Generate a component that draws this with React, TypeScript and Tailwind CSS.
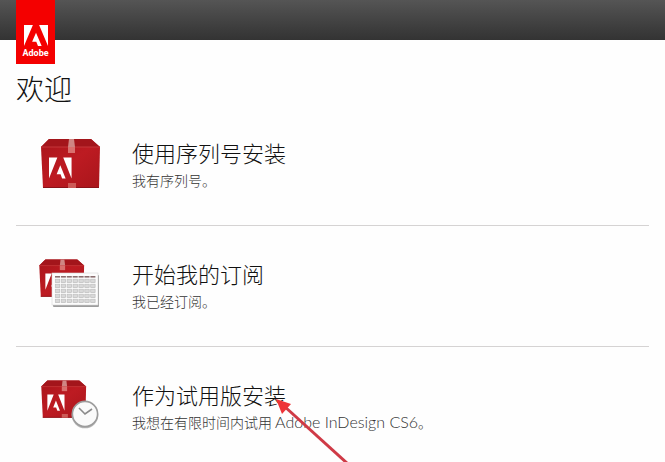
import type { ReactNode } from 'react'

type Option = {
  title: string
  detail: ReactNode
  icon: ReactNode
  marked?: boolean
}

const ADOBE_MARK =
  'M13.966 22.624l-1.69-4.281H8.122l3.892-9.144 5.662 13.425zM8.884 1.376H0v21.248zm6.232 0H24v21.248z'

function Box() {
  return (
    <g>
      <path d="M11 2H53L62 10L61 51H5L3 10Z" fill="url(#box-front)" />
      <path d="M11 2H53L62 10H3Z" fill="#a3151b" />
      <path d="M3 10H62" stroke="#c5363a" strokeWidth="1" />
      <path d="M5 50.5H61" stroke="#8a1218" strokeWidth="1" />
      {/* Tape */}
      <path d="M31 2H36L37 10H30Z" fill="#cf8683" />
      <path d="M30 10H37V16H30Z" fill="#d9706e" />
      <path d="M30 46H38V51H30Z" fill="#cc5a57" />
      <path d={ADOBE_MARK} fill="#fff" transform="translate(11 19) scale(0.94 1)" />
    </g>
  )
}

function IconFrame({ children }: { children: ReactNode }) {
  return (
    <svg width="64" height="56" viewBox="0 0 64 56" className="shrink-0" aria-hidden="true">
      <defs>
        <linearGradient id="box-front" x1="0" y1="0" x2="1" y2="1">
          <stop offset="0" stopColor="#a9151b" />
          <stop offset="0.5" stopColor="#bd1b22" />
          <stop offset="1" stopColor="#a9151b" />
        </linearGradient>
      </defs>
      {children}
    </svg>
  )
}

function SerialIcon() {
  return (
    <IconFrame>
      <Box />
    </IconFrame>
  )
}

function SubscriptionIcon() {
  const cols = [0, 1, 2, 3, 4, 5, 6]
  const rows = [0, 1, 2, 3, 4]

  return (
    <IconFrame>
      <g transform="translate(-1 0) scale(0.76)">
        <Box />
      </g>
      {/* Calendar sheet */}
      <rect x="15" y="17" width="46" height="32" rx="1" fill="#9d9d9d" />
      <rect x="14" y="15" width="46" height="32" fill="#fdfdfd" stroke="#d6d6d6" strokeWidth="0.6" />
      {cols.map((c) => (
        <g key={c}>
          <rect x={17 + c * 5.9} y="18" width="5" height="1.6" fill="#8b6f70" />
          {rows.map((r) => (
            <rect
              key={r}
              x={17.3 + c * 5.9}
              y={21.2 + r * 5}
              width="4.4"
              height="3.4"
              fill="#d9d9d9"
              stroke="#bdbdbd"
              strokeWidth="0.7"
            />
          ))}
        </g>
      ))}
    </IconFrame>
  )
}

function TrialIcon() {
  return (
    <IconFrame>
      <g transform="translate(1 0) scale(0.76)">
        <Box />
      </g>
      {/* Clock */}
      <circle cx="47" cy="36" r="13.3" fill="#b9b9b9" />
      <circle cx="47" cy="35" r="12.6" fill="#fafafa" stroke="#9c9c9c" strokeWidth="1.6" />
      <path d="M41 29L47 35L54 30" fill="none" stroke="#8a8a8a" strokeWidth="1.6" />
    </IconFrame>
  )
}

function Arrow() {
  return (
    <svg
      width="72"
      height="66"
      viewBox="0 0 72 66"
      className="pointer-events-none absolute top-5 right-2.5 translate-x-full"
      aria-hidden="true"
    >
      <path d="M8 7L72 65" stroke="#cf3a46" strokeWidth="3" />
      <path d="M0 0L15 5L6 15Z" fill="#ee3338" />
    </svg>
  )
}

const options: Option[] = [
  { title: '使用序列号安装', detail: '我有序列号。', icon: <SerialIcon /> },
  { title: '开始我的订阅', detail: '我已经订阅。', icon: <SubscriptionIcon /> },
  {
    title: '作为试用版安装',
    detail: (
      <>
        我想在有限时间内试用 <span className="font-['Lato',sans-serif] text-base leading-6 font-light">Adobe InDesign CS6</span>。
      </>
    ),
    icon: <TrialIcon />,
    marked: true,
  },
]

function OptionRow({ title, detail, icon, marked }: Option) {
  return (
    <li className="border-b border-[#d5d3d3] py-8 last:border-b-0 last:pb-0">
      <button type="button" className="flex w-full cursor-pointer items-start gap-[30px] pl-[22px] text-left">
        {icon}
        <span className="flex flex-col items-start">
          <span className="relative text-[22px] leading-[30px] text-[#111]">
            {title}
            {marked && <Arrow />}
          </span>
          <span className="text-sm leading-[26px] text-[#333]">{detail}</span>
        </span>
      </button>
    </li>
  )
}

export default function App() {
  return (
    <div className="min-h-screen overflow-hidden bg-[#fefefe] font-['Noto_Sans_CJK_SC',sans-serif] font-light">
      <header className="relative h-10 bg-linear-to-b from-[#555] to-[#333]">
        <div className="absolute top-0 left-4 flex h-16 w-[39px] flex-col items-center justify-end bg-[#f40000] pb-1">
          <svg width="24" height="21" viewBox="0 1.376 24 21.248" preserveAspectRatio="none" aria-hidden="true">
            <path d={ADOBE_MARK} fill="#fff" />
          </svg>
          <span className="font-['Roboto',sans-serif] text-[9px] leading-[14px] font-bold text-white">Adobe</span>
        </div>
      </header>

      <main className="px-4 pt-8">
        <h1 className="text-[28px] leading-[33px] text-[#111]">欢迎</h1>
        <ul>
          {options.map((option) => (
            <OptionRow key={option.title} {...option} />
          ))}
        </ul>
      </main>
    </div>
  )
}
